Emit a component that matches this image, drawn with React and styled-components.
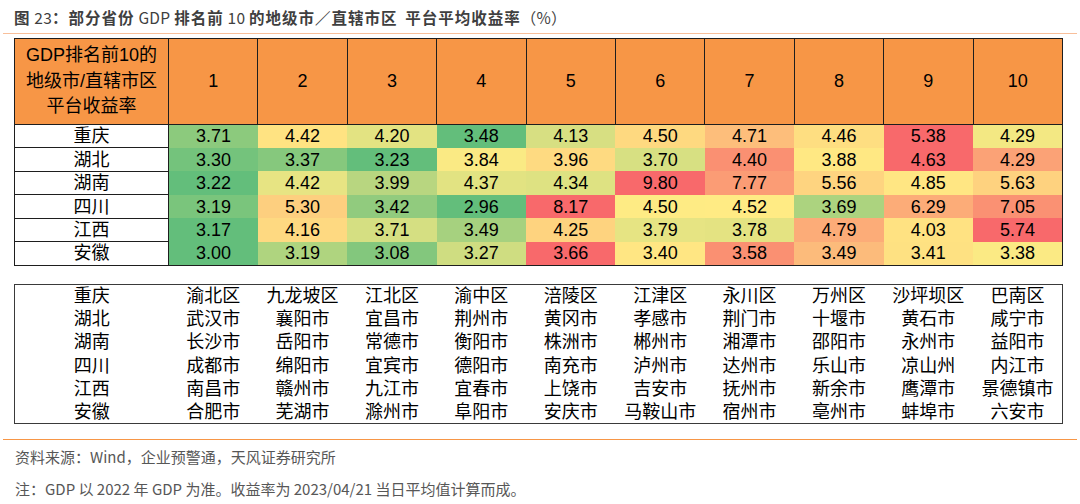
import styled, { createGlobalStyle } from 'styled-components'

const GlobalStyle = createGlobalStyle`
   html, body {
      margin: 0;
      padding: 0;
      background: #ffffff;
   }
`

const Page = styled.div`
   width: 1080px;
   height: 504px;
   overflow: hidden;
   background: #ffffff;
   font-family: "Liberation Sans", "Noto Sans CJK SC", sans-serif;
`
const TitleBar = styled.div`
   height: 33px;
   margin: 0 3px;
   padding-left: 11px;
   display: flex;
   align-items: center;
   border-bottom: 1.5px solid #f8bf9a;
   font-family: "Noto Sans CJK SC", sans-serif;
   font-size: 15.5px;
   letter-spacing: 1px;
   font-weight: 700;
   color: #3f3f3f;
   white-space: pre;
`
const Latin = styled.span`
   font-weight: 400;
   letter-spacing: 0.3px;
`
const Body = styled.div`
   padding: 4px 0 0 14px;
`
const Grid = styled.table`
   width: 1049px;
   table-layout: fixed;
   border-collapse: collapse;
   border: 1px solid ${p => p.$line};
   font-size: 18px;
   color: #000;
   margin-bottom: ${p => p.$gap || 0}px;
`
const HeadRow = styled.tr`
   height: 86px;
   background: #f79646;
`
const HeadCell = styled.th`
   border: 1px solid #1e1e1e;
   font-weight: 400;
   line-height: 25.5px;
   text-align: center;
   padding: 0;
`
const DataRow = styled.tr`
   height: ${p => p.$h}px;
`
const LabelCell = styled.td`
   padding: 0;
   text-align: center;
   line-height: 20px;
   background: #ffffff;
   border: ${p => (p.$boxed ? '1px solid #1e1e1e' : 'none')};
`
const ValueCell = styled.td`
   padding: 0;
   text-align: center;
   line-height: 20px;
   background: ${p => p.$bg || 'transparent'};
`
const FooterLine = styled.div`
   margin: 0 3px;
   height: 0;
   border-top: 1.5px solid #f79646;
`
const Notes = styled.div`
   padding: 7px 0 0 15px;
   display: flex;
   flex-direction: column;
   gap: 12px;
   font-family: "Noto Sans CJK SC", sans-serif;
   font-size: 15px;
   line-height: 20px;
   color: #575757;
`
const Note = styled.div`
   white-space: pre;
`

const provinces = ['重庆', '湖北', '湖南', '四川', '江西', '安徽']

const yields = [
   [3.71, 4.42, 4.20, 3.48, 4.13, 4.50, 4.71, 4.46, 5.38, 4.29],
   [3.30, 3.37, 3.23, 3.84, 3.96, 3.70, 4.40, 3.88, 4.63, 4.29],
   [3.22, 4.42, 3.99, 4.37, 4.34, 9.80, 7.77, 5.56, 4.85, 5.63],
   [3.19, 5.30, 3.42, 2.96, 8.17, 4.50, 4.52, 3.69, 6.29, 7.05],
   [3.17, 4.16, 3.71, 3.49, 4.25, 3.79, 3.78, 4.79, 4.03, 5.74],
   [3.00, 3.19, 3.08, 3.27, 3.66, 3.40, 3.58, 3.49, 3.41, 3.38],
]

const cities = [
   ['渝北区', '九龙坡区', '江北区', '渝中区', '涪陵区', '江津区', '永川区', '万州区', '沙坪坝区', '巴南区'],
   ['武汉市', '襄阳市', '宜昌市', '荆州市', '黄冈市', '孝感市', '荆门市', '十堰市', '黄石市', '咸宁市'],
   ['长沙市', '岳阳市', '常德市', '衡阳市', '株洲市', '郴州市', '湘潭市', '邵阳市', '永州市', '益阳市'],
   ['成都市', '绵阳市', '宜宾市', '德阳市', '南充市', '泸州市', '达州市', '乐山市', '凉山州', '内江市'],
   ['南昌市', '赣州市', '九江市', '宜春市', '上饶市', '吉安市', '抚州市', '新余市', '鹰潭市', '景德镇市'],
   ['合肥市', '芜湖市', '滁州市', '阜阳市', '安庆市', '马鞍山市', '宿州市', '亳州市', '蚌埠市', '六安市'],
]

// excel style 3 colour scale, per row: min green, median yellow, max red
const GREEN = [99, 190, 123]
const YELLOW = [255, 235, 132]
const RED = [248, 105, 107]

const mix = (a, b, t) => {
   const c = a.map((v, i) => Math.round(v + (b[i] - v) * t))
   return `rgb(${c[0]}, ${c[1]}, ${c[2]})`
}

const scaleColor = (v, row) => {
   const s = [...row].sort((a, b) => a - b)
   const min = s[0]
   const max = s[s.length - 1]
   const pos = (s.length - 1) / 2
   const mid = (s[Math.floor(pos)] + s[Math.ceil(pos)]) / 2
   if (v <= mid) return mix(GREEN, YELLOW, mid === min ? 1 : (v - min) / (mid - min))
   return mix(YELLOW, RED, (v - mid) / (max - mid))
}

const Cols = () => (
   <colgroup>
      <col style={{ width: 154 }} />
      {Array.from({ length: 10 }, (_, i) => <col key={i} />)}
   </colgroup>
)

export default function App() {
   return (
      <Page>
         <GlobalStyle />
         <TitleBar>
            图<Latin> 23</Latin>：部分省份<Latin> GDP </Latin>排名前<Latin> 10 </Latin>的地级市／直辖市区<Latin>  </Latin>平台平均收益率<Latin>（%）</Latin>
         </TitleBar>
         <Body>
            <Grid $line="#1e1e1e" $gap={18}>
               <Cols />
               <thead>
                  <HeadRow>
                     <HeadCell>GDP排名前10的<br />地级市/直辖市区<br />平台收益率</HeadCell>
                     {Array.from({ length: 10 }, (_, i) => <HeadCell key={i}>{i + 1}</HeadCell>)}
                  </HeadRow>
               </thead>
               <tbody>
                  {yields.map((row, r) => (
                     <DataRow key={r} $h={23.45}>
                        <LabelCell $boxed>{provinces[r]}</LabelCell>
                        {row.map((v, c) => (
                           <ValueCell key={c} $bg={scaleColor(v, row)}>{v.toFixed(2)}</ValueCell>
                        ))}
                     </DataRow>
                  ))}
               </tbody>
            </Grid>
            <Grid $line="#3a3a3a" $gap={15}>
               <Cols />
               <tbody>
                  {cities.map((row, r) => (
                     <DataRow key={r} $h={23.3}>
                        <LabelCell>{provinces[r]}</LabelCell>
                        {row.map((name, c) => <ValueCell key={c}>{name}</ValueCell>)}
                     </DataRow>
                  ))}
               </tbody>
            </Grid>
         </Body>
         <FooterLine />
         <Notes>
            <Note>资料来源：Wind，企业预警通，天风证券研究所</Note>
            <Note>注：GDP 以 2022 年 GDP 为准。收益率为 2023/04/21 当日平均值计算而成。</Note>
         </Notes>
      </Page>
   )
}
